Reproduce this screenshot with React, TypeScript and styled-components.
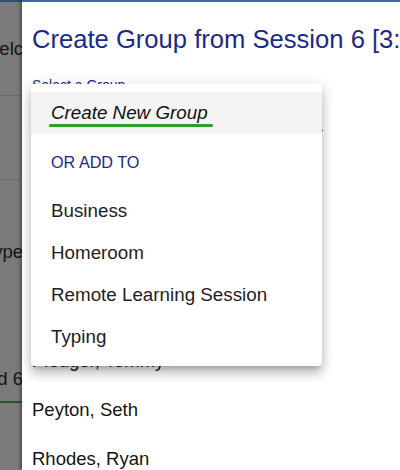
import React from "react";
import styled, { createGlobalStyle } from "styled-components";

const Global = createGlobalStyle`
  html, body { margin: 0; padding: 0; background: #fff; }
  body {
    font-family: "Liberation Sans", Arial, Helvetica, sans-serif;
    overflow: hidden;
  }
`;

const NAVY = "#1b2a88";

const Screen = styled.div`
  display: flex;
  width: 400px;
  height: 470px;
  overflow: hidden;
`;

/* dimmed page showing behind the sheet */
const Backdrop = styled.div`
  width: 22px;
  flex: none;
  display: flex;
  flex-direction: column;
  background: #7b7b7b;
  border-top: 2px solid #2f4d7c;
  overflow: hidden;
`;

const BackRow = styled.div<{ $h: number; $line?: string; $lineW?: number }>`
  height: ${(p) => p.$h}px;
  flex: none;
  display: flex;
  align-items: center;
  justify-content: flex-end;
  box-sizing: border-box;
  border-bottom: ${(p) =>
    p.$line ? `${p.$lineW ?? 1}px solid ${p.$line}` : "none"};
  font-size: 18.5px;
  color: #141414;
  white-space: nowrap;
  overflow: hidden;
`;

const BackText = styled.span`
  margin-right: -1px;
`;

const Sheet = styled.div`
  flex: 1;
  position: relative;
  min-width: 0;
  background: #fff;
  border-top: 2px solid #3b69b0;
  padding-left: 10px;
  box-shadow: -2px 0 3px rgba(0, 0, 0, 0.35);
  overflow: hidden;
`;

const Title = styled.h1`
  margin: 22px 0 0;
  font-size: 25.6px;
  line-height: 30px;
  font-weight: 400;
  color: ${NAVY};
  white-space: nowrap;
`;

const FieldLabel = styled.div`
  margin-top: 23px;
  font-size: 14px;
  line-height: 16px;
  color: ${NAVY};
`;

const SelectField = styled.div`
  width: 291px;
  height: 37px;
  border-bottom: 1px solid ${NAVY};
`;

const NameList = styled.div`
  margin-top: 9.5px;
  display: flex;
  flex-direction: column;
`;

const NameRow = styled.div`
  height: 49px;
  flex: none;
  box-sizing: border-box;
  padding-top: 13px;
  font-size: 18.5px;
  line-height: 22px;
  color: #141414;
  white-space: nowrap;
`;

const Menu = styled.div`
  position: absolute;
  left: 9px;
  top: 82px;
  width: 291px;
  padding: 8px 0;
  background: #fff;
  border-radius: 4px;
  box-shadow: 0 5px 5px -3px rgba(0, 0, 0, 0.2),
    0 8px 10px 1px rgba(0, 0, 0, 0.14), 0 3px 14px 2px rgba(0, 0, 0, 0.12);
`;

const MenuItem = styled.div<{ $active?: boolean }>`
  height: 42px;
  display: flex;
  align-items: center;
  padding: 0 20px;
  background: ${(p) => (p.$active ? "#f4f4f4" : "transparent")};
  font-size: 18.8px;
  line-height: 22px;
  color: #1e1e1e;
`;

const MenuHeading = styled.div`
  height: 56px;
  display: flex;
  align-items: center;
  padding: 0 20px;
  font-size: 16.2px;
  color: ${NAVY};
  text-transform: uppercase;
`;

const Marked = styled.span`
  position: relative;
  font-style: italic;
  color: #111;

  &::after {
    content: "";
    position: absolute;
    left: -2px;
    right: -5px;
    bottom: -2.5px;
    height: 3px;
    border-radius: 2px;
    background: #2f9e2f;
  }
`;

const groups = ["Business", "Homeroom", "Remote Learning Session", "Typing"];

const students = [
  "Martinez, Ana",
  "Nguyen, Linh",
  "Olsen, Mark",
  "Owens, Jada",
  "Pledger, Tommy",
  "Peyton, Seth",
  "Rhodes, Ryan",
];

export default function App() {
  return (
    <>
      <Global />
      <Screen>
        <Backdrop>
          <BackRow $h={94} $line="#6a6a6a">
            <BackText>Welc</BackText>
          </BackRow>
          <BackRow $h={84} $line="#6d6d6d" />
          <BackRow $h={144}>
            <BackText>Type</BackText>
          </BackRow>
          <BackRow $h={32} />
          <BackRow $h={47} $line="#1f5a1f" $lineW={2}>
            <BackText>Period 6</BackText>
          </BackRow>
          <BackRow $h={66} />
        </Backdrop>
        <Sheet>
          <Title>Create Group from Session 6 [3:00 PM]</Title>
          <FieldLabel>Select a Group</FieldLabel>
          <SelectField />
          <NameList>
            {students.map((s) => (
              <NameRow key={s}>{s}</NameRow>
            ))}
          </NameList>
          <Menu>
            <MenuItem $active>
              <Marked>Create New Group</Marked>
            </MenuItem>
            <MenuHeading>Or add to</MenuHeading>
            {groups.map((g) => (
              <MenuItem key={g}>{g}</MenuItem>
            ))}
          </Menu>
        </Sheet>
      </Screen>
    </>
  );
}
